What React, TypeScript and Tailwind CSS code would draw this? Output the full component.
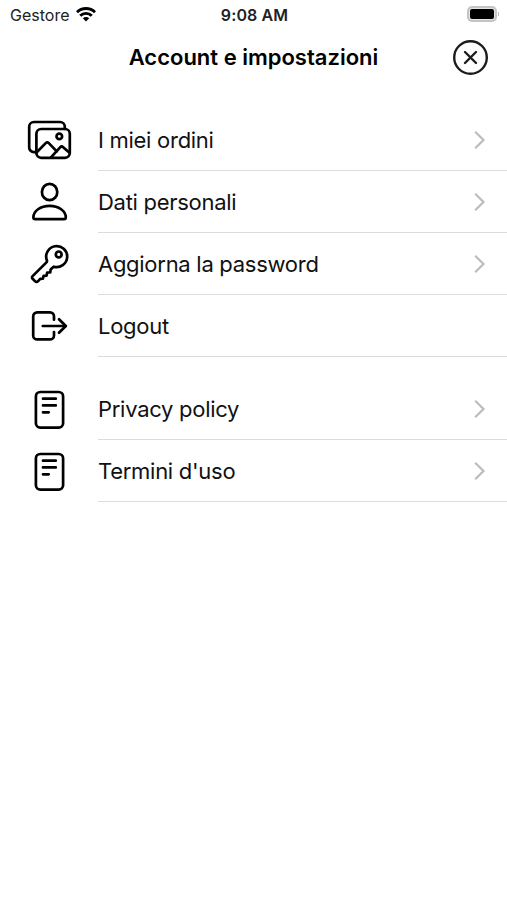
import React from 'react';

type IconProps = { children: React.ReactNode };

const Icon = ({ children }: IconProps) => (
  <svg
    viewBox="0 0 48 48"
    className="w-12 h-12 shrink-0 text-black"
    fill="none"
    stroke="currentColor"
    strokeWidth="2.7"
    strokeLinecap="round"
    strokeLinejoin="round"
  >
    {children}
  </svg>
);

const PhotosIcon = () => (
  <Icon>
    <path d="M11.4 36.2H9a4.8 4.8 0 0 1-4.8-4.8V10.8A4.8 4.8 0 0 1 9 6h26a4.8 4.8 0 0 1 4.8 4.8v2" />
    <rect x="11.4" y="13" width="33.4" height="28.8" rx="4.8" />
    <circle cx="34.3" cy="20.4" r="2.8" />
    <path d="M12 36l8.700-8.900a2.200 2.200 0 0 1 3.100 0l8 8.300" />
    <path d="M26.200 41.200l8.900-9.800a2.200 2.200 0 0 1 3.100-.2l6.300 5.600" />
  </Icon>
);

const UserIcon = () => (
  <Icon>
    <ellipse cx="24.6" cy="14" rx="7.7" ry="8.2" />
    <path d="M8.4 39.3C8.4 33 15.4 27.9 24.6 27.9S40.8 33 40.8 39.3c0 1.1-.7 1.9-1.8 1.9H10.2c-1.1 0-1.800-.8-1.800-1.900z" />
  </Icon>
);

const KeyIcon = () => (
  <Icon>
    <path d="M22 20.7A10.5 10.5 0 1 1 28.7 26.7L25.600 29.600l-.3 2.700-3.100.2-.7 3.200-2.900.1-.7 2.900-2.700.2-2.300 2.500a1.900 1.900 0 0 1-2.700 0L7.600 38.800a1.900 1.900 0 0 1 0-2.700L21.200 22.600q.9-.9.8-1.900z" />
    <circle cx="33.7" cy="14.4" r="2.9" />
  </Icon>
);

const LogoutIcon = () => (
  <Icon>
    <path d="M29 17.7v-3.3a4 4 0 0 0-4-4H12.2a4 4 0 0 0-4 4v19a4 4 0 0 0 4 4H25a4 4 0 0 0 4-4v-3.3" />
    <path d="M17.8 24h23" />
    <path d="M34 17.2l6.8 6.8-6.8 6.8" />
  </Icon>
);

const DocumentIcon = () => (
  <Icon>
    <rect x="10.9" y="7" width="27.2" height="35.6" rx="4.4" />
    <path d="M18 13.7h12.8M18 20.4h12.8M18 27.3h5.700" />
  </Icon>
);

const Chevron = () => (
  <svg viewBox="0 0 12 20" className="w-3 h-5 text-[#bcbcbc]" fill="none" stroke="currentColor" strokeWidth="2.2">
    <path d="M1.2 1.8L9.5 10l-8.3 8.2" />
  </svg>
);

const StatusBar = () => (
  <div className="h-[30px] grid grid-cols-3 items-center pl-2.5 pr-2 text-[16px] text-[#222]">
    <div className="flex items-center gap-[7px]">
      <span>Gestore</span>
      <svg viewBox="0 0 20 15" className="w-5 h-[15px] -mt-px" fill="none" stroke="#000" strokeWidth="2.9">
        <path d="M1 5.2a12.8 12.8 0 0 1 18 0" />
        <path d="M4.2 8.8a8.2 8.2 0 0 1 11.6 0" />
        <path d="M10 14.5l-3.2-3.2a4.5 4.5 0 0 1 6.4 0z" fill="#000" stroke="none" />
      </svg>
    </div>
    <span className="text-center font-semibold tracking-[0.1px]">9:08 AM</span>
    <div className="flex items-center justify-end gap-px -mt-0.5">
      <div className="w-[30px] h-4 rounded-[5px] border-2 border-[#c4c4c4] bg-[#e4e4e4] p-px">
        <div className="w-full h-full rounded-[2px] bg-black" />
      </div>
      <div className="w-px h-1 bg-[#bbb]" />
    </div>
  </div>
);

const Header = () => (
  <header className="h-[55px] grid grid-cols-[1fr_auto_1fr] items-center px-[18px]">
    <h1 className="col-start-2 text-[22px] font-semibold text-black">Account e impostazioni</h1>
    <button className="justify-self-end" aria-label="Chiudi">
      <svg viewBox="0 0 36 36" className="w-9 h-9 block" fill="none" stroke="#1c1c1e" strokeWidth="2.4" strokeLinecap="round">
        <circle cx="17.5" cy="17.5" r="16.3" />
        <path d="M12 12l11 11M23 12l-11 11" />
      </svg>
    </button>
  </header>
);

type RowProps = { icon: React.ReactNode; label: string; arrow?: boolean };

const Row = ({ icon, label, arrow = true }: RowProps) => (
  <li className="flex items-center h-[62px] pl-[25px]">
    {icon}
    <div className="flex-1 h-full ml-[25px] pr-[21px] flex items-center justify-between border-b border-[#dcdcdc]">
      <span className="pt-0.5 text-[22px] tracking-[-0.28px] text-[#111]">{label}</span>
      {arrow && <Chevron />}
    </div>
  </li>
);

export default function App() {
  return (
    <main className="min-h-screen bg-white font-['Inter','Liberation_Sans',sans-serif]">
      <StatusBar />
      <Header />
      <nav className="pt-6 flex flex-col gap-[21px]">
        <ul>
          <Row icon={<PhotosIcon />} label="I miei ordini" />
          <Row icon={<UserIcon />} label="Dati personali" />
          <Row icon={<KeyIcon />} label="Aggiorna la password" />
          <Row icon={<LogoutIcon />} label="Logout" arrow={false} />
        </ul>
        <ul>
          <Row icon={<DocumentIcon />} label="Privacy policy" />
          <Row icon={<DocumentIcon />} label="Termini d'uso" />
        </ul>
      </nav>
    </main>
  );
}
